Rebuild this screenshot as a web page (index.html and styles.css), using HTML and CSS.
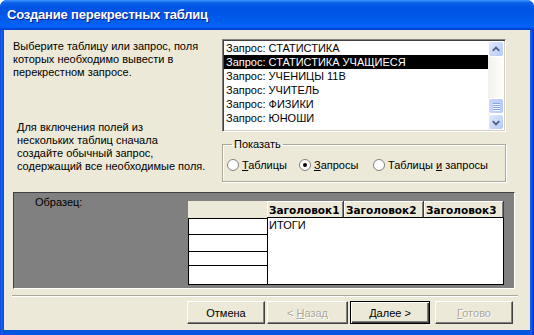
FILE: index.html
```html
<!DOCTYPE html>
<html lang="ru">
<head>
<meta charset="utf-8">
<title>Создание перекрестных таблиц</title>
<link rel="stylesheet" href="styles.css">
</head>
<body>
<div class="window">
  <div class="titlebar"><span class="title">Создание перекрестных таблиц</span></div>
  <div class="client">
    <div class="top">
      <div class="left">
        <p class="hint1">Выберите таблицу или запрос, поля<br>которых необходимо вывести в<br>перекрестном запросе.</p>
        <p class="hint2">Для включения полей из<br>нескольких таблиц сначала<br>создайте обычный запрос,<br>содержащий все необходимые поля.</p>
      </div>
      <div class="right">
        <div class="listbox">
          <ul class="items">
            <li>Запрос: СТАТИСТИКА</li>
            <li class="sel">Запрос: СТАТИСТИКА УЧАЩИЕСЯ</li>
            <li>Запрос: УЧЕНИЦЫ 11В</li>
            <li>Запрос: УЧИТЕЛЬ</li>
            <li>Запрос: ФИЗИКИ</li>
            <li>Запрос: ЮНОШИ</li>
          </ul>
          <div class="scrollbar">
            <div class="sb-btn"><svg width="15" height="15" viewBox="0 0 15 15"><path d="M4 9 L7.5 5.5 L11 9" fill="none" stroke="#4d6185" stroke-width="2"/></svg></div>
            <div class="sb-track"><div class="sb-thumb"><span></span><span></span><span></span><span></span></div></div>
            <div class="sb-btn"><svg width="15" height="15" viewBox="0 0 15 15"><path d="M4 6 L7.5 9.5 L11 6" fill="none" stroke="#4d6185" stroke-width="2"/></svg></div>
          </div>
        </div>
        <fieldset class="group">
          <legend>Показать</legend>
          <div class="radios">
            <span class="radio r1"><svg width="12" height="12" viewBox="0 0 12 12"><circle cx="6" cy="6" r="5.5" fill="#fff" stroke="#808080"/></svg><span><u>Т</u>аблицы</span></span>
            <span class="radio r2"><svg width="12" height="12" viewBox="0 0 12 12"><circle cx="6" cy="6" r="5.5" fill="#fff" stroke="#808080"/><circle cx="6" cy="6" r="2" fill="#000"/></svg><span><u>З</u>апросы</span></span>
            <span class="radio r3"><svg width="12" height="12" viewBox="0 0 12 12"><circle cx="6" cy="6" r="5.5" fill="#fff" stroke="#808080"/></svg><span>Таблицы <u>и</u> запросы</span></span>
          </div>
        </fieldset>
      </div>
    </div>
    <div class="sample">
      <div class="sample-label">Образец:</div>
      <div class="table">
        <div class="corner"></div>
        <div class="heads">
          <div class="head h1">Заголовок1</div>
          <div class="head h2">Заголовок2</div>
          <div class="head h3">Заголовок3</div>
        </div>
        <div class="rowheads">
          <div class="rh r-a"></div>
          <div class="rh r-b"></div>
          <div class="rh r-c"></div>
          <div class="rh r-d"></div>
        </div>
        <div class="data">ИТОГИ</div>
      </div>
    </div>
    <div class="sep"></div>
    <div class="buttons">
      <button class="btn cancel">Отмена</button>
      <button class="btn back" disabled>&lt; <u>Н</u>азад</button>
      <button class="btn next default"><u>Д</u>алее &gt;</button>
      <button class="btn finish" disabled><u>Г</u>отово</button>
    </div>
  </div>
</div>
</body>
</html>
```
FILE: styles.css
```css
* { box-sizing: border-box; }
html, body { margin: 0; padding: 0; background: #fff; }
body {
  font-family: "Liberation Sans", Arial, sans-serif;
  font-size: 11px;
  color: #000;
}
.window {
  width: 534px;
  height: 335px;
  display: flex;
  flex-direction: column;
  background: linear-gradient(90deg, #0831d9 0, #166aee 1px, #0855dd 3px, #0855dd 530px, #166aee 531px, #0831d9 533px);
  border-radius: 7px 7px 0 0;
  overflow: hidden;
}
.titlebar {
  height: 30px;
  flex: none;
  display: flex;
  align-items: center;
  padding: 0 0 1px 7px;
  background: linear-gradient(180deg, #3d95ff 0, #0a5fea 3px, #0054e3 8px, #0054e3 40%, #0063f5 88%, #0058ee 93%, #0046d5 96%, #003dd0 100%);
}
.title {
  color: #fff;
  font-weight: bold;
  font-size: 13px;
  letter-spacing: -0.2px;
  text-shadow: 1px 1px #0a1e8a;
}
.client {
  flex: 1;
  margin: 0 4px 5px 4px;
  background: #ece9d8;
  display: flex;
  flex-direction: column;
}
.top { height: 162px; flex: none; display: flex; }
.left { width: 218px; flex: none; }
.hint1 { margin: 0; padding: 10px 0 0 9px; line-height: 13px; }
.hint2 { margin: 42px 0 0 0; padding: 0 0 0 13px; line-height: 13px; }
.right { width: 284px; flex: none; padding-top: 9px; }

.listbox {
  height: 93px;
  display: flex;
  background: #fff;
  border: 1px solid;
  border-color: #808080 #fff #fff #808080;
  box-shadow: inset 1px 1px #404040, inset -1px -1px #d4d0c8;
  padding: 1px;
}
.items {
  list-style: none;
  margin: 0;
  padding: 0;
  flex: 1;
}
.items li {
  height: 14px;
  line-height: 14px;
  padding-left: 2px;
  white-space: nowrap;
}
.items li.sel { background: #000; color: #fff; }
.scrollbar {
  width: 16px;
  flex: none;
  display: flex;
  flex-direction: column;
  background: linear-gradient(90deg, #f3f1ec, #fefefb);
}
.sb-btn {
  height: 16px;
  flex: none;
  display: flex;
  align-items: center;
  justify-content: center;
  border: 1px solid #fff;
  border-radius: 3px;
  background: linear-gradient(135deg, #e1eafe, #b4c8f6);
}
.sb-track { flex: 1; display: flex; flex-direction: column; justify-content: flex-end; }
.sb-thumb {
  height: 16px;
  border: 1px solid #fff;
  border-radius: 3px;
  background: linear-gradient(90deg, #c8d6fb, #b8cbf7);
  display: flex;
  flex-direction: column;
  align-items: center;
  justify-content: center;
  gap: 1px;
}
.sb-thumb span { width: 7px; height: 1px; background: #8ca3e0; box-shadow: 0 1px #eef4fe; }

.group {
  margin: 6px 0 0 0;
  padding: 7px 4px 6px 4px;
  height: 44px;
  border: 1px solid #aca899;
  box-shadow: inset 1px 1px #fff, 1px 1px #fff;
  border-radius: 0;
}
.group legend {
  padding: 0 2px;
  margin-left: 5px;
  line-height: 13px;
}
.radios { display: flex; align-items: center; height: 13px; }
.radio { display: flex; align-items: center; gap: 3px; white-space: nowrap; }
.radio svg { flex: none; }
.r1 { width: 72px; }
.r2 { width: 74px; }

.sample {
  margin-left: 9px;
  width: 502px;
  height: 97px;
  flex: none;
  display: flex;
  background: #808080;
  border: 1px solid;
  border-color: #404040 #fff #fff #404040;
}
.sample-label { width: 174px; padding: 3px 0 0 21px; line-height: 13px; }
.table {
  margin-top: 8px;
  display: grid;
  grid-template-columns: 79px 237px;
  grid-template-rows: 17px 67px;
  height: 84px;
}
.corner { background: #ece9d8; }
.heads { display: flex; }
.head {
  font-family: "DejaVu Sans", "Liberation Sans", sans-serif;
  font-size: 10.5px;
  font-weight: bold;
  background: #ece9d8;
  border-bottom: 1px solid #000;
  border-right: 1px solid #404040;
  box-shadow: inset 1px 1px #fff, inset -1px 0 #808080;
  padding: 2px 0 0 2px;
  line-height: 14px;
  white-space: nowrap;
  overflow: hidden;
}
.h1 { width: 77px; }
.h2 { width: 80px; }
.h3 { width: 80px; }
.rowheads {
  display: flex;
  flex-direction: column;
  border: 1px solid #000;
  border-top: 0;
  border-right: 0;
  background: #fff;
}
.rh { border-top: 1px solid #000; background: #fff; }
.r-a { height: 16px; }
.r-b { height: 17px; }
.r-c { height: 14px; }
.r-d { flex: 1; }
.data {
  background: #fff;
  border: 1px solid #000;
  border-top: 0;
  padding: 1px 0 0 1px;
  line-height: 13px;
}

.sep {
  margin: 6px 12px 0 8px;
  height: 2px;
  border-top: 1px solid #aca899;
  border-bottom: 1px solid #fff;
  flex: none;
}
.buttons {
  display: flex;
  justify-content: flex-end;
  padding: 4px 17px 0 0;
  gap: 2px;
}
.btn {
  height: 23px;
  width: 78px;
  margin: 0;
  padding: 0;
  font-family: "Liberation Sans", Arial, sans-serif;
  font-size: 11px;
  color: #000;
  background: #ece9d8;
  border: 1px solid;
  border-color: #fff #404040 #404040 #fff;
  box-shadow: inset -1px -1px #808080;
  border-radius: 0;
}
.btn.back { width: 81px; }
.btn.next { width: 80px; margin-right: 3px; }
.btn:disabled { color: #aca899; text-shadow: 1px 1px #fff; }
.btn.default {
  border-color: #000;
  box-shadow: inset 1px 1px #fff, inset -1px -1px #404040, inset -2px -2px #808080;
}
```
